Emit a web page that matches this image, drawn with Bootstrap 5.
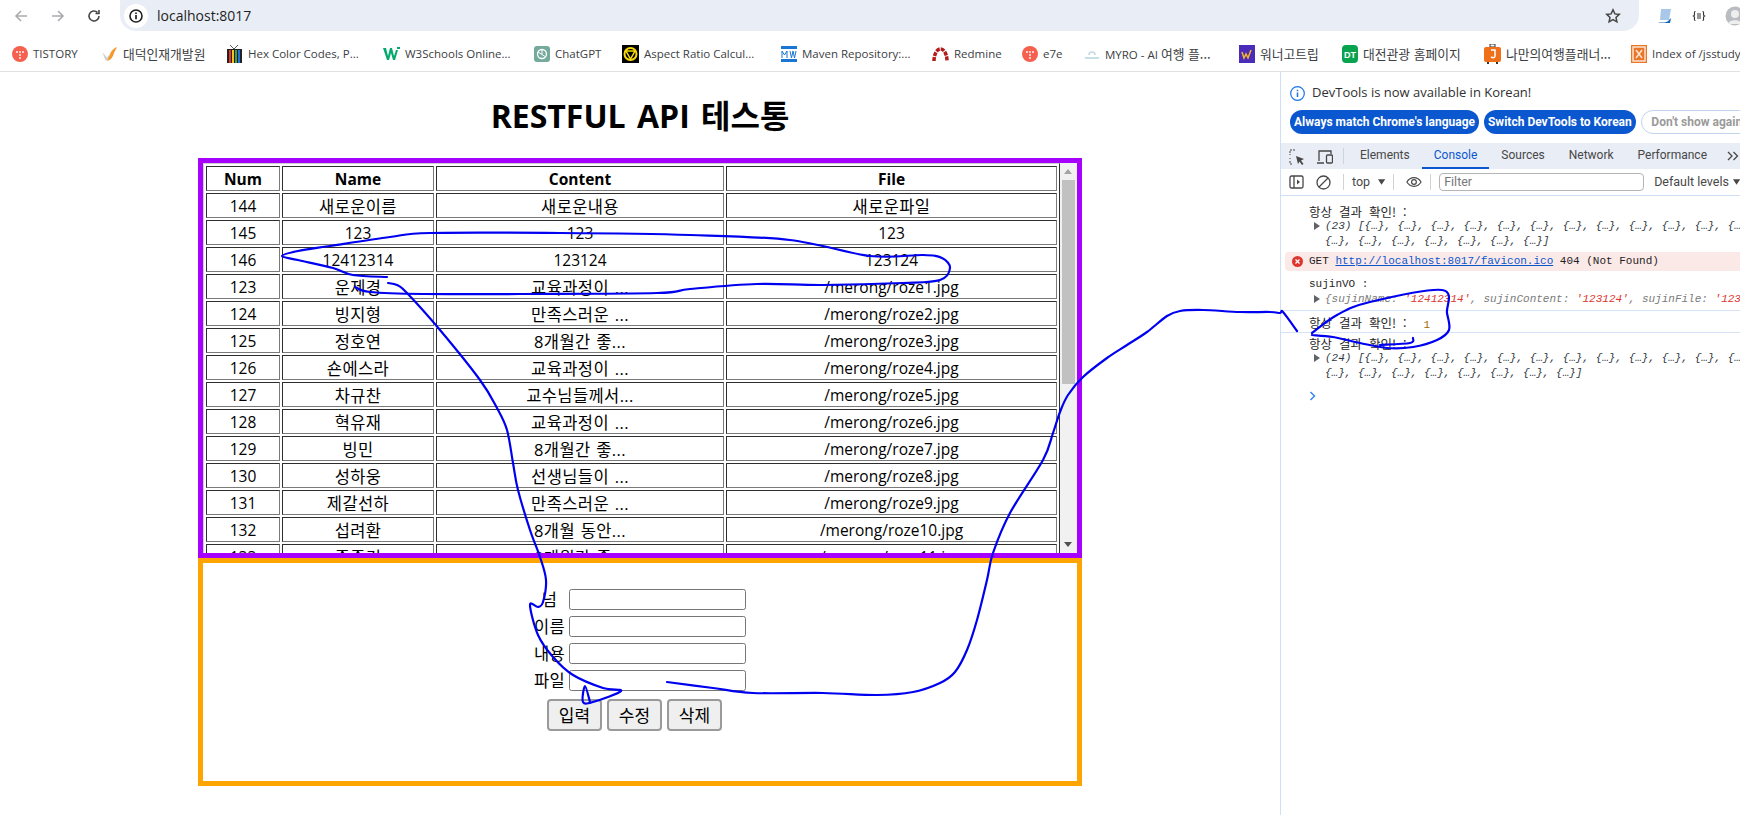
<!DOCTYPE html>
<html lang="ko">
<head>
<meta charset="utf-8">
<title>RESTFUL API 테스통</title>
<link href="https://cdn.jsdelivr.net/npm/bootstrap@5.3.0/dist/css/bootstrap.min.css" rel="stylesheet">
<style>
html,body{height:815px;overflow:hidden;background:#fff}
body{font-family:"Open Sans","Noto Sans CJK KR",sans-serif;color:#000;position:relative;width:1740px}
.ko{font-family:"Noto Sans CJK KR",sans-serif}
/* browser chrome */
.top-bar{height:36px}
.nav-ico{width:36.5px;flex:none}
.nav-strip{padding-left:3px;width:120px;height:31px}
.omni{width:1519px;height:31px;background:#e9edf6;border-bottom-left-radius:16px;border-bottom-right-radius:16px;padding:0 18px 0 4px;font-size:14px;color:#1f1f1f;font-family:"Open Sans",sans-serif}
.omni-info{width:24px;height:24px;border-radius:50%;background:#fff;margin-right:9px}
.ext-row{width:101px;padding-left:18px;gap:19px;height:31px;overflow:hidden}
.bm-bar{height:36px;border-bottom:1px solid #dfe1e5;display:grid;grid-template-columns:88px 126px 157px 151px 88px 159px 151px 90px 62px 155px 103px 142px 147px 109px;padding-left:12px;font-size:12px;color:#3c4043;align-items:center;white-space:nowrap;overflow:hidden}
.bm-item{gap:5px}
.bm-item svg{flex:none}
.bm-item>span{font-size:11.5px}
.bm-item span.ko{font-size:12.8px}
/* page */
.page-pane{width:1280px;flex:none}
.page-title{font-size:32px;font-weight:700;line-height:43px;margin:22px 0 21px;text-align:center;word-spacing:3px}
.purple-box{width:884px;height:400px;border:5px solid #a600ff;margin:0 auto;overflow:hidden}
.tbl-clip{width:857px;flex:none;overflow:hidden}
.api-table{border-collapse:separate;border-spacing:2px;width:857px;table-layout:fixed;border:1px solid;border-color:#d0d0d0 #333 #333 #d0d0d0;font-size:15.5px;text-align:center}
.api-table td,.api-table th{border:1px solid;border-color:#2e2e2e #7a7a7a #7a7a7a #2e2e2e;padding:2px 1px 0;line-height:21px;height:25px;white-space:nowrap;overflow:hidden}
.api-table th{font-weight:700}
.api-table td.hg,.form-lab{font-size:16.5px;letter-spacing:.4px;word-spacing:1px}
.col-n{width:74px}.col-m{width:152px}.col-c{width:288px}.col-f{width:331px}
.fake-sb{width:17px;flex:none;background:#f1f1f1;padding-top:17px;padding-bottom:17px;position:relative}
.sb-thumb{width:13px;height:204px;margin:0 2px;background:#c1c1c1}
.sb-arrow{position:absolute;left:4px;width:0;height:0;border-left:4.5px solid transparent;border-right:4.5px solid transparent}
.sb-up{top:6px;border-bottom:5px solid #a3a3a3}
.sb-down{bottom:6px;border-top:5px solid #505050}
.orange-box{width:884px;height:228px;border:5px solid #ffa500;margin:0 auto;padding-top:26px;font-size:16px}
.form-line{height:21px;margin-bottom:6px;gap:4px;line-height:21px}
.form-lab{width:31px;text-align:center;white-space:nowrap}
.native-input.form-control{width:177px;height:21px;min-height:0;padding:0 2px;border:1px solid #767676;border-radius:2.5px;box-shadow:none}
.btn-line{gap:5px;padding-right:11px;margin-top:8px}
.native-btn.btn{width:55px;height:32px;padding:0;font-size:17px;line-height:27px;background:#efefef;border:2px solid #9a9a9a;border-radius:4px;color:#000}
/* devtools */
.dev-pane{width:460px;flex:none;height:744px;border-left:1px solid #cfdff5;overflow:hidden;font-family:Roboto,"Open Sans",sans-serif;font-size:12px;color:#474747}
.info-bar{height:71px;padding:13px 0 0 9px;white-space:nowrap}
.info-text{gap:7px;height:16px;color:#303030;font-family:"Open Sans",sans-serif;font-size:13px}
.pill-row{gap:5px;margin-top:9px}
.pill.btn{height:24px;padding:0 4px;font-family:Roboto,sans-serif;font-size:12px;line-height:22px;font-weight:700;border:0;white-space:nowrap;color:#fff;background:#0b57d0;flex:none}
.pill.pill-ghost.btn{background:#fff;border:1px solid #c2d4ee;color:#9a9a9a;width:112px;padding:0 5px}
.tab-bar{height:26px;background:#e9edf6;padding-left:8px;white-space:nowrap;font-size:12px}
.tab-ico{width:27px;flex:none}
.v-div{width:1px;height:16px;background:#cfd3da;flex:none}
.dev-tab{height:26px;padding:0 12px;line-height:25px}
.dev-tab.on{color:#0b57d0;border-bottom:2px solid #0b57d0}
.tool-bar{height:27px;border-bottom:1px solid #cfdff5;padding-left:8px;white-space:nowrap;font-size:12.5px}
.filter-box{width:205px;height:18px;border:1px solid #b5b5b5;border-radius:4px;padding:0 4px;line-height:16px;color:#777;flex:none}
.lvl-label{margin-left:10px}
.eye-ico{margin-left:12px}
.more-tabs{margin-left:8px}
.cns{font-family:"Liberation Mono","Noto Sans CJK KR",monospace;font-size:11px;color:#1f1f1f;line-height:15px;white-space:nowrap;overflow:hidden}
.cns .han{font-family:"Noto Sans CJK KR",sans-serif;font-size:12.5px;word-spacing:3.500px}
.cns-row{padding-left:28px;height:15px;position:relative}
.cns-sub{padding-left:44px;height:15px;font-style:italic;position:relative;color:#303942}
.tri{position:absolute;left:33px;top:3px;width:0;height:0;border-left:6px solid #5f6368;border-top:4px solid transparent;border-bottom:4px solid transparent}
.err-row{height:19px;margin:3px 0 0 4px;background:#fbe9e7;border-radius:4px 0 0 4px;padding-left:24px;line-height:19px;position:relative}
.err-dot{position:absolute;left:7px;top:4px;width:11px;height:11px}
.err-row a{color:#0b57d0}
.k{color:#7a7a7a}.s{color:#dc362e}.num{color:#a36a00;margin-left:17px}
.sep-line{border-bottom:1px solid #d5e3f7}
.first-msg{margin-top:8px}
.sujin-top{margin-top:6px}
.cns-sub.sujin-sub{height:19px}
.cns-row.res-one{height:22px;padding-top:4px}
.res-two{margin-top:3px}
.prompt-row{margin-top:8px}
.ink{position:absolute;left:0;top:0;width:1740px;height:815px;pointer-events:none}
.ink path{fill:none;stroke:#0000f0;stroke-width:2.2;stroke-linecap:round;stroke-linejoin:round}
</style>
</head>
<body>
<header>
  <div class="top-bar d-flex align-items-start">
    <div class="nav-strip d-flex align-items-center">
      <div class="nav-ico d-flex justify-content-center"><svg width="14" height="14" viewBox="0 0 14 14"><path d="M13 7H2M7 2 2 7l5 5" fill="none" stroke="#a9abae" stroke-width="1.6"/></svg></div>
      <div class="nav-ico d-flex justify-content-center"><svg width="14" height="14" viewBox="0 0 14 14"><path d="M1 7h11M7 2l5 5-5 5" fill="none" stroke="#a9abae" stroke-width="1.6"/></svg></div>
      <div class="nav-ico d-flex justify-content-center"><svg width="14" height="14" viewBox="0 0 14 14"><path d="M12 7a5 5 0 1 1-1.6-3.7M12 1v3.5H8.500" fill="none" stroke="#474747" stroke-width="1.6"/></svg></div>
    </div>
    <div class="omni d-flex align-items-center">
      <div class="omni-info d-flex align-items-center justify-content-center"><svg width="14" height="14" viewBox="0 0 14 14"><circle cx="7" cy="7" r="6" fill="none" stroke="#1f1f1f" stroke-width="1.6"/><path d="M7 6v4.300M7 3.400v1.500" stroke="#1f1f1f" stroke-width="1.7"/></svg></div>
      <span>localhost:8017</span>
      <svg class="ms-auto" width="16" height="16" viewBox="0 0 16 16"><path d="m8 1.800 1.900 4.100 4.400.5-3.300 3 .9 4.400L8 11.600l-3.900 2.200.9-4.400-3.300-3 4.400-.5z" fill="none" stroke="#474747" stroke-width="1.500"/></svg>
    </div>
    <div class="ext-row d-flex align-items-center">
      <svg width="16" height="16" viewBox="0 0 16 16" class="flex-shrink-0"><path d="M4 1h10l-2 11H3z" fill="#a9c7e8"/><path d="M1 14c4 1 9 1 11-2l2-2-1 5H3z" fill="#1565b5"/></svg>
      <svg width="14" height="12" viewBox="0 0 14 12" class="flex-shrink-0"><path d="M3.500 1.500C2 1.500 2.500 3 2.500 4.500 2.500 5.500 1.500 6 1.500 6s1 .5 1 1.500c0 1.500-.5 3 1 3M10.500 1.500c1.500 0 1 1.500 1 3 0 1 1 1.500 1 1.500s-1 .5-1 1.500c0 1.500.5 3-1 3M5 4h4M5 6h4M5 8h4" fill="none" stroke="#333" stroke-width="1.100"/></svg>
      <svg width="20" height="20" viewBox="0 0 20 20" class="flex-shrink-0"><circle cx="10" cy="10" r="9.500" fill="#b9bcc0"/><circle cx="10" cy="8" r="4" fill="#eee"/><path d="M3 18c1-5 13-5 14 0z" fill="#eee"/></svg>
    </div>
  </div>
  <nav class="bm-bar">
    <div class="bm-item d-flex align-items-center"><svg width="16" height="16" viewBox="0 0 16 16"><circle cx="8" cy="8" r="8" fill="#f5604f"/><path d="M5 6h.01M8 6h.01M11 6h.01M8 9h.01M8 12h.01" stroke="#fff" stroke-width="1.800" stroke-linecap="round"/></svg><span>TISTORY</span></div>
    <div class="bm-item d-flex align-items-center"><svg width="18" height="16" viewBox="0 0 18 16"><path d="M2 6c2 3 2 6 4 9 2-2 3-3 3-6-1 1-2 2-2 3-1-2-3-4-5-6z" fill="#cfcfcf"/><path d="M7 15c4-1 6-4 7-8 1-2 2-4 3-6-3 1-6 4-7 7-1 2-2 5-3 7z" fill="#f39a2e"/></svg><span class="ko">대덕인재개발원</span></div>
    <div class="bm-item d-flex align-items-center"><svg width="17" height="18" viewBox="0 0 17 18"><path d="M1 4h15v14H1z" fill="#222"/><path d="M3 5h2v13H3z" fill="#e8332a"/><path d="M6 5h2v13H6z" fill="#f6c324"/><path d="M9 5h2v13H9z" fill="#3aa14a"/><path d="M12 5h2v13h-2z" fill="#2a6fd6"/><path d="M4 0l4 4 4-4" fill="none" stroke="#555"/></svg><span>Hex Color Codes, P...</span></div>
    <div class="bm-item d-flex align-items-center"><svg width="17" height="14" viewBox="0 0 17 14"><path d="M0 1h3l2 8 2-8h2l2 8 2-6h2l-3 10h-2L8 6l-2 7H4z" fill="#04aa6d"/><path d="M14 0h3v2h-3z" fill="#04aa6d"/></svg><span>W3Schools Online...</span></div>
    <div class="bm-item d-flex align-items-center"><svg width="16" height="16" viewBox="0 0 16 16"><rect width="16" height="16" rx="3" fill="#74aa9c"/><circle cx="8" cy="8" r="4.500" fill="none" stroke="#fff" stroke-width="1.300"/><path d="M8 3.500v5l3 2M4 6l4 2.500" fill="none" stroke="#fff"/></svg><span>ChatGPT</span></div>
    <div class="bm-item d-flex align-items-center"><svg width="17" height="18" viewBox="0 0 17 18"><rect width="17" height="18" fill="#000"/><circle cx="8.500" cy="9" r="6" fill="none" stroke="#f5d90a" stroke-width="2"/><path d="M4 6h9L8.500 14z" fill="none" stroke="#f5d90a" stroke-width="1.500"/></svg><span>Aspect Ratio Calcul...</span></div>
    <div class="bm-item d-flex align-items-center"><svg width="16" height="16" viewBox="0 0 16 16"><rect width="16" height="3" fill="#1976d2"/><rect y="13" width="16" height="3" fill="#1976d2"/><path d="M1 12V5l2.500 4L6 5v7M9 5l1.500 7L12 5l1.500 7L15 5" fill="none" stroke="#1976d2" stroke-width="1"/></svg><span>Maven Repository:...</span></div>
    <div class="bm-item d-flex align-items-center"><svg width="17" height="14" viewBox="0 0 17 14"><path d="M2 14C2 7 5 2 8.500 2S15 7 15 14" fill="none" stroke="#b21c1c" stroke-width="3.500" stroke-dasharray="4 1"/></svg><span>Redmine</span></div>
    <div class="bm-item d-flex align-items-center"><svg width="16" height="16" viewBox="0 0 16 16"><circle cx="8" cy="8" r="8" fill="#f5604f"/><path d="M5 6h.01M8 6h.01M11 6h.01M8 9h.01M8 12h.01" stroke="#fff" stroke-width="1.800" stroke-linecap="round"/></svg><span>e7e</span></div>
    <div class="bm-item d-flex align-items-center"><svg width="16" height="14" viewBox="0 0 16 14"><path d="M5 8a3 3 0 0 1 6 0" fill="none" stroke="#c6d6df" stroke-width="1.500"/><path d="M1 11h14" stroke="#c6e0e8" stroke-width="2"/></svg><span>MYRO - AI <span class="ko">여행 플...</span></span></div>
    <div class="bm-item d-flex align-items-center"><svg width="16" height="18" viewBox="0 0 16 18"><rect width="16" height="18" fill="#4b2cb8"/><path d="M3 7l2 6 2-4 2 4 3-8" fill="none" stroke="#f3b72a" stroke-width="1.500"/></svg><span class="ko">워너고트립</span></div>
    <div class="bm-item d-flex align-items-center"><svg width="16" height="18" viewBox="0 0 16 18"><rect width="16" height="18" rx="4" fill="#07a34f"/><text x="8" y="13" font-size="9" font-weight="700" fill="#fff" text-anchor="middle" font-family="Liberation Sans">DT</text></svg><span class="ko">대전관광 홈페이지</span></div>
    <div class="bm-item d-flex align-items-center"><svg width="17" height="20" viewBox="0 0 17 20"><path d="M6 0h5v3H6z" fill="none" stroke="#333"/><rect y="3" width="17" height="15" rx="2" fill="#f0701a"/><path d="M3 18h2v2H3zM12 18h2v2h-2z" fill="#333"/><path d="M7 6h4v6c0 2-2 2-4 1" fill="none" stroke="#fff" stroke-width="1.500"/></svg><span class="ko">나만의여행플래너...</span></div>
    <div class="bm-item d-flex align-items-center"><svg width="16" height="18" viewBox="0 0 16 18"><rect width="16" height="18" fill="#e9772b"/><rect x="2" y="2" width="12" height="14" fill="none" stroke="#fbe3cf" stroke-width="1.500"/><path d="M5 5l6 8M11 5l-6 8" stroke="#fbe3cf" stroke-width="1.500"/></svg><span>Index of /jsstudy</span></div>
  </nav>
</header>

<main class="d-flex">
  <section class="page-pane">
    <h1 class="page-title">RESTFUL API 테스통</h1>
    <div class="purple-box d-flex">
      <div class="tbl-clip">
        <table class="api-table">
          <colgroup><col class="col-n"><col class="col-m"><col class="col-c"><col class="col-f"></colgroup>
          <thead><tr><th>Num</th><th>Name</th><th>Content</th><th>File</th></tr></thead>
          <tbody>
            <tr><td>144</td><td class="hg">새로운이름</td><td class="hg">새로운내용</td><td class="hg">새로운파일</td></tr>
            <tr><td>145</td><td>123</td><td>123</td><td>123</td></tr>
            <tr><td>146</td><td>12412314</td><td>123124</td><td>123124</td></tr>
            <tr><td>123</td><td class="hg">운제경</td><td class="hg">교육과정이 ...</td><td>/merong/roze1.jpg</td></tr>
            <tr><td>124</td><td class="hg">빙지형</td><td class="hg">만족스러운 ...</td><td>/merong/roze2.jpg</td></tr>
            <tr><td>125</td><td class="hg">정호연</td><td class="hg">8개월간 좋...</td><td>/merong/roze3.jpg</td></tr>
            <tr><td>126</td><td class="hg">숀에스라</td><td class="hg">교육과정이 ...</td><td>/merong/roze4.jpg</td></tr>
            <tr><td>127</td><td class="hg">차규찬</td><td class="hg">교수님들께서...</td><td>/merong/roze5.jpg</td></tr>
            <tr><td>128</td><td class="hg">혁유재</td><td class="hg">교육과정이 ...</td><td>/merong/roze6.jpg</td></tr>
            <tr><td>129</td><td class="hg">빙민</td><td class="hg">8개월간 좋...</td><td>/merong/roze7.jpg</td></tr>
            <tr><td>130</td><td class="hg">성하웅</td><td class="hg">선생님들이 ...</td><td>/merong/roze8.jpg</td></tr>
            <tr><td>131</td><td class="hg">제갈선하</td><td class="hg">만족스러운 ...</td><td>/merong/roze9.jpg</td></tr>
            <tr><td>132</td><td class="hg">섭려환</td><td class="hg">8개월 동안...</td><td>/merong/roze10.jpg</td></tr>
            <tr><td>133</td><td class="hg">종종경</td><td class="hg">8개월간 좋...</td><td>/merong/roze11.jpg</td></tr>
          </tbody>
        </table>
      </div>
      <div class="fake-sb"><span class="sb-arrow sb-up"></span><div class="sb-thumb"></div><span class="sb-arrow sb-down"></span></div>
    </div>
    <div class="orange-box">
      <div class="form-line d-flex justify-content-center"><span class="form-lab">넘</span><input class="form-control native-input" type="text" aria-label="넘"></div>
      <div class="form-line d-flex justify-content-center"><span class="form-lab">이름</span><input class="form-control native-input" type="text" aria-label="이름"></div>
      <div class="form-line d-flex justify-content-center"><span class="form-lab">내용</span><input class="form-control native-input" type="text" aria-label="내용"></div>
      <div class="form-line d-flex justify-content-center"><span class="form-lab">파일</span><input class="form-control native-input" type="text" aria-label="파일"></div>
      <div class="btn-line d-flex justify-content-center"><button class="btn native-btn" type="button">입력</button><button class="btn native-btn" type="button">수정</button><button class="btn native-btn" type="button">삭제</button></div>
    </div>
  </section>

  <aside class="dev-pane">
    <div class="info-bar">
      <div class="info-text d-flex align-items-center"><svg width="15" height="15" viewBox="0 0 15 15"><circle cx="7.500" cy="7.500" r="6.800" fill="none" stroke="#1a73e8" stroke-width="1.200"/><path d="M7.500 6.500v4.500M7.500 3.800v1.500" stroke="#1a73e8" stroke-width="1.500"/></svg><span>DevTools is now available in Korean!</span></div>
      <div class="pill-row d-flex">
        <button class="btn pill rounded-pill" type="button">Always match Chrome's language</button>
        <button class="btn pill rounded-pill" type="button">Switch DevTools to Korean</button>
        <button class="btn pill pill-ghost rounded-pill" type="button">Don't show again</button>
      </div>
    </div>
    <div class="tab-bar d-flex align-items-center">
      <div class="tab-ico"><svg width="16" height="16" viewBox="0 0 16 16"><path d="M6 1H1v5M1 9v1M1 12v3h3" fill="none" stroke="#474747" stroke-dasharray="2 1"/><path d="M7 7l8 3-3 1.500L14.500 15l-1.500 1-2.500-3.500L9 15z" fill="#474747"/></svg></div>
      <div class="tab-ico"><svg width="17" height="14" viewBox="0 0 17 14"><path d="M1 13h7M3 11V1h12v3" fill="none" stroke="#474747" stroke-width="1.300"/><rect x="10.500" y="5" width="6" height="8" rx="1" fill="none" stroke="#474747" stroke-width="1.300"/></svg></div>
      <span class="v-div"></span>
      <span class="dev-tab ms-1">Elements</span><span class="dev-tab on">Console</span><span class="dev-tab">Sources</span><span class="dev-tab">Network</span><span class="dev-tab">Performance</span>
      <svg width="12" height="10" viewBox="0 0 12 10" class="more-tabs"><path d="M1 1l4 4-4 4M6.500 1l4 4-4 4" fill="none" stroke="#474747" stroke-width="1.300"/></svg>
    </div>
    <div class="tool-bar d-flex align-items-center">
      <div class="tab-ico"><svg width="15" height="14" viewBox="0 0 15 14"><rect x="1" y="1" width="13" height="12" rx="1.500" fill="none" stroke="#474747" stroke-width="1.300"/><path d="M5 1v12" stroke="#474747" stroke-width="1.300"/><path d="M8 4.500 11 7l-3 2.500z" fill="#474747"/></svg></div>
      <div class="tab-ico"><svg width="15" height="15" viewBox="0 0 15 15"><circle cx="7.500" cy="7.500" r="6.500" fill="none" stroke="#474747" stroke-width="1.300"/><path d="M3 12 12 3" stroke="#474747" stroke-width="1.300"/></svg></div>
      <span class="v-div"></span>
      <span class="ms-2">top</span><svg width="8" height="6" viewBox="0 0 8 6" class="ms-2"><path d="M0 0h8L4 6z" fill="#474747"/></svg>
      <span class="v-div ms-2"></span>
      <svg width="18" height="12" viewBox="0 0 18 12" class="eye-ico"><path d="M1 6c4-6.500 12-6.500 16 0-4 6.500-12 6.500-16 0z" fill="none" stroke="#474747" stroke-width="1.300"/><circle cx="9" cy="6" r="2.700" fill="none" stroke="#474747" stroke-width="1.300"/></svg>
      <span class="v-div ms-2"></span>
      <div class="filter-box ms-2">Filter</div>
      <span class="lvl-label">Default levels</span><svg width="8" height="6" viewBox="0 0 8 6" class="ms-1"><path d="M0 0h8L4 6z" fill="#474747"/></svg>
    </div>
    <div class="cns">
      <div class="cns-row first-msg"><span class="han">항상 결과 확인! :</span></div>
      <div class="cns-sub"><i class="tri"></i>(23) [{…}, {…}, {…}, {…}, {…}, {…}, {…}, {…}, {…}, {…}, {…}, {…}, {…}, {…}, {…}, {…},</div>
      <div class="cns-sub">{…}, {…}, {…}, {…}, {…}, {…}, {…}]</div>
      <div class="err-row"><svg class="err-dot" viewBox="0 0 11 11"><circle cx="5.500" cy="5.500" r="5.500" fill="#dc362e"/><path d="M3.500 3.500l4 4M7.500 3.500l-4 4" stroke="#fff" stroke-width="1.300"/></svg>GET <a href="#">http://localhost:8017/favicon.ico</a> 404 (Not Found)</div>
      <div class="cns-row sujin-top">sujinVO :</div>
      <div class="cns-sub sep-line sujin-sub"><i class="tri"></i><span class="k">{sujinName:</span> <span class="s">'12412314'</span><span class="k">, sujinContent:</span> <span class="s">'123124'</span><span class="k">, sujinFile:</span> <span class="s">'123124'</span><span class="k">}</span></div>
      <div class="cns-row sep-line res-one"><span class="han">항상 결과 확인! :</span><span class="num">1</span></div>
      <div class="cns-row res-two"><span class="han">항상 결과 확인! :</span></div>
      <div class="cns-sub"><i class="tri"></i>(24) [{…}, {…}, {…}, {…}, {…}, {…}, {…}, {…}, {…}, {…}, {…}, {…}, {…}, {…}, {…}, {…},</div>
      <div class="cns-sub">{…}, {…}, {…}, {…}, {…}, {…}, {…}, {…}]</div>
      <div class="cns-row prompt-row"><svg width="7" height="10" viewBox="0 0 7 10"><path d="M1.500 1l4 4-4 4" fill="none" stroke="#3b82f6" stroke-width="1.500"/></svg></div>
    </div>
  </aside>
</main>

<svg class="ink" viewBox="0 0 1740 815" aria-hidden="true" id="ink"></svg>
<script>
var strokes=[
[[355,287],[370,292],[423,294],[523,294],[657,293],[690,289],[757,284],[823,285],[903,283],[940,280],[950,268],[942,258],[923,255],[870,256],[790,240],[690,235],[560,233],[430,233],[390,237],[330,246],[298,251],[282,256],[298,260],[333,268],[353,275],[387,277]],
[[388,283],[397,285],[407,293],[440,330],[480,380],[497,408],[507,430],[513,463],[518,490],[530,530],[540,557],[546,580],[543,602],[538,607],[530,605],[538,635],[553,657],[573,675],[603,688],[621,691],[593,702],[583,702],[585,686],[590,702]],
[[667,682],[713,688],[753,693],[823,693],[877,695],[913,692],[940,683],[955,672],[967,650],[977,620],[987,580],[993,553],[1010,513],[1043,460],[1053,433],[1060,412],[1068,395],[1083,377],[1107,358],[1127,345],[1147,332],[1167,316],[1180,311],[1203,310],[1240,312],[1270,312],[1280,313],[1283,312],[1297,331]],
[[1312,333],[1337,315],[1370,302],[1442,290],[1447,313],[1449,330],[1437,340],[1413,347],[1387,348],[1360,343],[1333,337],[1312,335]],
[[1380,345],[1410,343],[1413,338]]
];
var ink=document.getElementById('ink');
strokes.forEach(function(p){
  var d='M'+p[0][0]+' '+p[0][1];
  for(var i=0;i<p.length-1;i++){
    var a=p[Math.max(i-1,0)],b=p[i],c=p[i+1],e=p[Math.min(i+2,p.length-1)];
    d+='C'+(b[0]+(c[0]-a[0])/6)+' '+(b[1]+(c[1]-a[1])/6)+' '+(c[0]-(e[0]-b[0])/6)+' '+(c[1]-(e[1]-b[1])/6)+' '+c[0]+' '+c[1];
  }
  var el=document.createElementNS('http://www.w3.org/2000/svg','path');
  el.setAttribute('d',d);ink.appendChild(el);
});
</script>
<script src="https://cdn.jsdelivr.net/npm/bootstrap@5.3.0/dist/js/bootstrap.bundle.min.js"></script>
</body>
</html>
